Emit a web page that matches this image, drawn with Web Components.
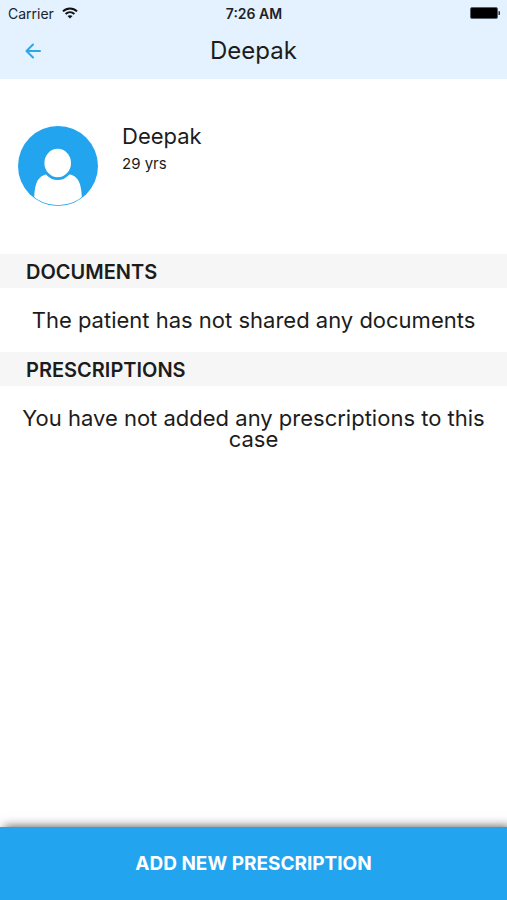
<!DOCTYPE html>
<html lang="en">
<head>
<meta charset="utf-8">
<meta name="viewport" content="width=device-width, initial-scale=1">
<title>Deepak</title>
<style>
  html, body { margin: 0; height: 100%; }
  body { font-family: Inter, "Open Sans", sans-serif; color: #1c1c1c; background: #fff; }
</style>
</head>
<body>
<patient-screen>
  <status-bar slot="top" carrier="Carrier" time="7:26 AM"></status-bar>
  <nav-bar slot="top">Deepak</nav-bar>
  <patient-card><span slot="name">Deepak</span><span slot="age">29 yrs</span></patient-card>
  <record-section><span slot="title">DOCUMENTS</span>The patient has not shared any documents</record-section>
  <record-section><span slot="title">PRESCRIPTIONS</span>You have not added any prescriptions to this case</record-section>
  <action-bar slot="bottom">ADD NEW PRESCRIPTION</action-bar>
</patient-screen>
<script>
  const define = (name, html) => customElements.define(name, class extends HTMLElement {
    constructor() {
      super();
      this.attachShadow({ mode: "open" }).innerHTML = html;
    }
    connectedCallback() {
      for (const el of this.shadowRoot.querySelectorAll("[data-attr]"))
        el.textContent = this.getAttribute(el.dataset.attr);
    }
  });

  define("status-bar", `
    <style>
      :host { display: grid; grid-template-columns: 1fr auto 1fr; align-items: center;
              height: 26px; padding: 0 7px 0 8px; font-size: 14px; color: #1b2329; }
      .left { display: flex; align-items: center; gap: 8px; }
      .time { font-weight: 600; }
      .battery { justify-self: end; }
      svg { display: block; }
    </style>
    <div class="left"><span data-attr="carrier"></span>
      <svg width="16" height="12" viewBox="0 0 16 12" fill="none" stroke="#111" stroke-width="2" aria-hidden="true">
        <path d="M1 4.4C5 .4 11 .4 15 4.4M3.600 7.100C6.200 4.700 9.800 4.700 12.400 7.100"/>
        <path d="M8 11.600L5.500 9.100C7 7.800 9 7.800 10.500 9.100Z" fill="#111" stroke="none"/>
      </svg>
    </div>
    <span class="time" data-attr="time"></span>
    <svg class="battery" width="30" height="12" viewBox="0 0 30 12" aria-hidden="true">
      <rect x=".5" y=".5" width="27" height="11" rx="1.500" fill="#000" stroke="#53616a"/>
      <path d="M28.500 4a2 2 0 0 1 0 4Z" fill="#26313a"/>
    </svg>`);

  define("nav-bar", `
    <style>
      :host { display: grid; grid-template-columns: 48px 1fr 48px; align-items: center;
              height: 53px; box-sizing: border-box; padding: 0 8px 4px; }
      button { display: grid; place-items: center; width: 50px; height: 44px; padding: 0;
               border: 0; background: none; }
      h1 { margin: 0; font-size: 24px; line-height: 28px; font-weight: 400; text-align: center; }
    </style>
    <button type="button" aria-label="Back">
      <svg width="16" height="16" viewBox="0 0 16 16" fill="none" stroke="#2ba6e8" stroke-width="2"
           stroke-linecap="round" stroke-linejoin="round" aria-hidden="true">
        <path d="M8 1.500L1.500 8L8 14.500M1.500 8H15"/>
      </svg>
    </button>
    <h1><slot></slot></h1>`);

  define("patient-card", `
    <style>
      :host { display: flex; gap: 24px; padding: 47px 18px 48px; }
      svg { display: block; flex: none; }
      .name { margin-top: -4px; font-size: 22px; line-height: 28px; }
      .age { font-size: 15px; line-height: 28px; }
    </style>
    <svg width="80" height="80" viewBox="0 0 80 80" role="img" aria-label="Patient photo">
      <defs><clipPath id="disc"><circle cx="40" cy="40" r="39.200"/></clipPath></defs>
      <circle cx="40" cy="40" r="40" fill="#23a4ee"/>
      <g clip-path="url(#disc)">
        <path d="M16 80C16 60 18 51 28 48.500C31 48 50 48 52 48.500C62 51 64 60 64 80Z" fill="#fff"/>
        <ellipse cx="39.700" cy="37.500" rx="15.300" ry="16.500" fill="#23a4ee"/>
        <ellipse cx="39.700" cy="37" rx="13.300" ry="14.300" fill="#fff"/>
      </g>
    </svg>
    <div><div class="name"><slot name="name"></slot></div><div class="age"><slot name="age"></slot></div></div>`);

  define("record-section", `
    <style>
      :host { display: block; }
      h2 { margin: 0; padding: 2px 26px 0; background: #f6f6f6; font-size: 20px; line-height: 32px; font-weight: 600; }
      p { margin: 0; padding: 22px 20px 21px; font-size: 22px; line-height: 21px; text-align: center; }
    </style>
    <h2><slot name="title"></slot></h2>
    <p><slot></slot></p>`);

  define("action-bar", `
    <style>
      :host { display: block; }
      button { display: block; width: 100%; height: 73px; padding: 0; border: 0; background: #23a4ee;
               color: #fff; font: 700 19px/24px Inter, "Open Sans", sans-serif;
               box-shadow: 4px 0 10px rgba(0, 0, 0, .7); }
    </style>
    <button type="button"><slot></slot></button>`);

  define("patient-screen", `
    <style>
      :host { display: flex; flex-direction: column; min-height: 100vh; overflow: hidden; }
      header { background: #e3f2fe; }
      main { flex: 1; }
    </style>
    <header><slot name="top"></slot></header>
    <main><slot></slot></main>
    <footer><slot name="bottom"></slot></footer>`);
</script>
</body>
</html>
